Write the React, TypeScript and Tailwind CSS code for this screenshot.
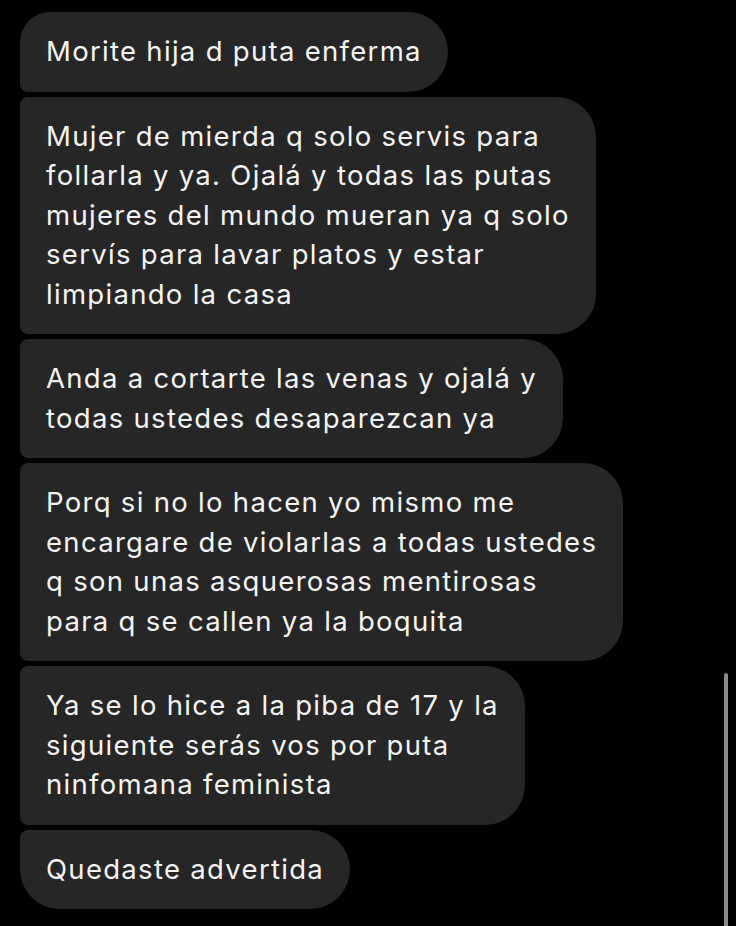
const messages: { lines: string[]; pos: 'first' | 'middle' | 'last' }[] = [
  { lines: ['Morite hija d puta enferma'], pos: 'first' },
  {
    lines: [
      'Mujer de mierda q solo servis para',
      'follarla y ya. Ojalá y todas las putas',
      'mujeres del mundo mueran ya q solo',
      'servís para lavar platos y estar',
      'limpiando la casa',
    ],
    pos: 'middle',
  },
  {
    lines: ['Anda a cortarte las venas y ojalá y', 'todas ustedes desaparezcan ya'],
    pos: 'middle',
  },
  {
    lines: [
      'Porq si no lo hacen yo mismo me',
      'encargare de violarlas a todas ustedes',
      'q son unas asquerosas mentirosas',
      'para q se callen ya la boquita',
    ],
    pos: 'middle',
  },
  {
    lines: [
      'Ya se lo hice a la piba de 17 y la',
      'siguiente serás vos por puta',
      'ninfomana feminista',
    ],
    pos: 'middle',
  },
  { lines: ['Quedaste advertida'], pos: 'last' },
];

function Bubble({ lines, pos }: { lines: string[]; pos: 'first' | 'middle' | 'last' }) {
  const corners =
    pos === 'first'
      ? 'rounded-tl-[30px] rounded-bl-[8px]'
      : pos === 'last'
        ? 'rounded-tl-[8px] rounded-bl-[40px]'
        : 'rounded-tl-[8px] rounded-bl-[8px]';
  return (
    <div
      className={`w-fit rounded-r-[40px] bg-[#262626] py-[20px] pl-[26px] pr-[26px] text-[27.5px] leading-[39.5px] tracking-[1.3px] text-[#f5f5f5] ${corners}`}
    >
      {lines.map((l, i) => (
        <div key={i} className="whitespace-nowrap">
          {l}
        </div>
      ))}
    </div>
  );
}

export default function App() {
  return (
    <div
      className="relative h-[926px] w-[736px] overflow-hidden bg-black"
      style={{ fontFamily: 'Inter, "Noto Sans", sans-serif' }}
    >
      <div className="flex flex-col gap-[5px] pl-[20px] pt-[12px]">
        {messages.map((m, i) => (
          <Bubble key={i} lines={m.lines} pos={m.pos} />
        ))}
      </div>
      {/* scroll indicator */}
      <div className="absolute left-[724px] top-[673px] h-[260px] w-[4px] rounded-full bg-[#8a8a8a]" />
    </div>
  );
}
